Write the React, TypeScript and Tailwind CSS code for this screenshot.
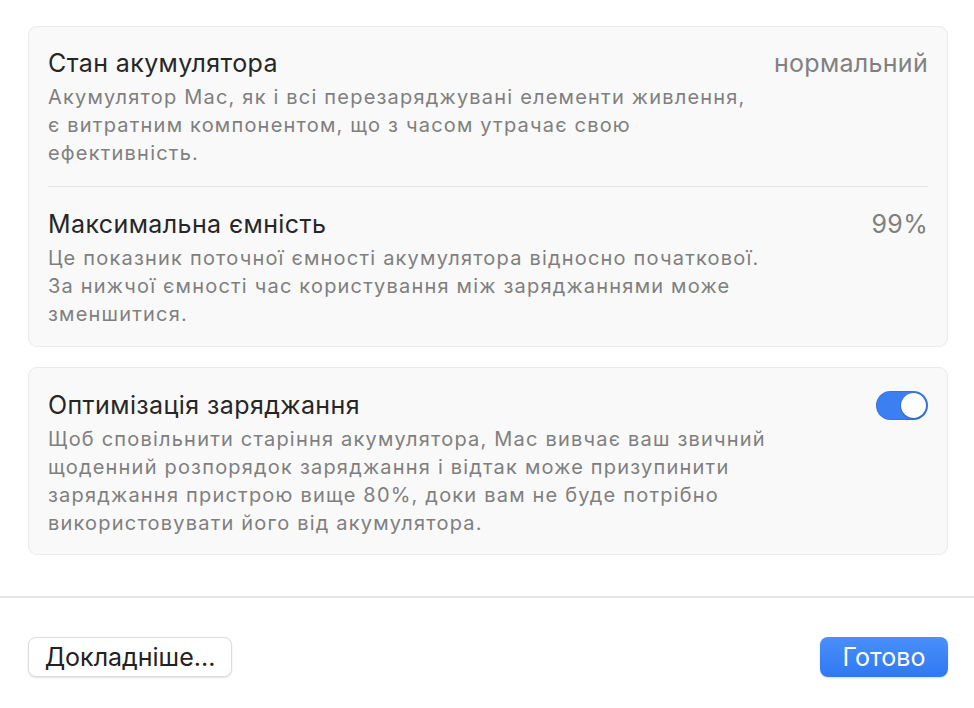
import React from "react";

const font = { fontFamily: "Inter, 'Noto Sans', sans-serif" };

function Row({ title, value, lines, toggle }: { title: string; value?: string; lines: string[]; toggle?: boolean }) {
  return (
    <div className="flex flex-col">
      <div className="flex h-[28px] items-center justify-between">
        <div className="text-[25px] leading-[28px] text-[#262626] tracking-[0.4px]">{title}</div>
        {value && <div className="text-[25px] leading-[28px] text-[#808080] tracking-[0.3px]">{value}</div>}
        {toggle && (
          <div className="flex h-[29px] w-[52px] items-center justify-end rounded-full bg-[#3b7ff2] p-[2px] shadow-[inset_0_0_0_1px_rgba(0,0,0,0.08)]">
            <div className="h-[25px] w-[25px] rounded-full bg-white shadow-[0_0_1px_rgba(0,0,0,0.4),0_1px_2px_rgba(0,0,0,0.2)]" />
          </div>
        )}
      </div>
      <div className="mt-[6px] text-[20px] leading-[28px] text-[#7f7f7f] tracking-[1.2px]">
        {lines.map((l, i) => (
          <div key={i}>{l}</div>
        ))}
      </div>
    </div>
  );
}

export default function App() {
  return (
    <div className="flex h-[708px] w-[974px] flex-col bg-white" style={font}>
      <div className="pl-[28px] pr-[26px] pt-[26px]">
        <div className="rounded-[9px] border border-[#ebebeb] bg-[#f9f9f9] px-[19px]">
          <div className="pt-[22px] pb-[19px] border-b border-[#e3e3e3]">
            <Row
              title="Стан акумулятора"
              value="нормальний"
              lines={[
                "Акумулятор Mac, як і всі перезаряджувані елементи живлення,",
                "є витратним компонентом, що з часом утрачає свою",
                "ефективність.",
              ]}
            />
          </div>
          <div className="pt-[23px] pb-[18px]">
            <Row
              title="Максимальна ємність"
              value="99%"
              lines={[
                "Це показник поточної ємності акумулятора відносно початкової.",
                "За нижчої ємності час користування між заряджаннями може",
                "зменшитися.",
              ]}
            />
          </div>
        </div>

        <div className="mt-[20px] rounded-[9px] border border-[#ebebeb] bg-[#f9f9f9] px-[19px] pt-[23px] pb-[17px]">
          <Row
            title="Оптимізація заряджання"
            toggle
            lines={[
              "Щоб сповільнити старіння акумулятора, Mac вивчає ваш звичний",
              "щоденний розпорядок заряджання і відтак може призупинити",
              "заряджання пристрою вище 80%, доки вам не буде потрібно",
              "використовувати його від акумулятора.",
            ]}
          />
        </div>
      </div>

      <div className="mt-[41px] h-[2px] w-full bg-[#e5e5e5]" />

      <div className="flex items-center justify-between pl-[28px] pr-[26px] pt-[39px]">
        <button className="h-[40px] w-[204px] rounded-[8px] border border-[#dcdcdc] bg-white text-[25px] leading-none text-[#222] shadow-[0_1px_2px_rgba(0,0,0,0.12)]">
          Докладніше...
        </button>
        <button className="h-[40px] w-[128px] rounded-[8px] bg-gradient-to-b from-[#4a8ff9] to-[#2f78f2] text-[25px] leading-none text-white shadow-[0_1px_2px_rgba(0,0,0,0.15)]">
          Готово
        </button>
      </div>
    </div>
  );
}
